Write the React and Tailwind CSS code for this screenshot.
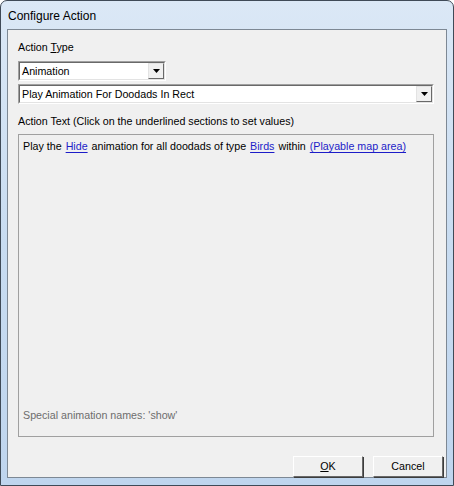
import { useState } from 'react'

function Combo({ value, className }) {
  return (
    <div className={`flex h-[20px] items-stretch border border-t-[#a0a0a0] border-l-[#a0a0a0] border-b-white border-r-white ${className}`}>
      <div className="flex flex-1 items-stretch border border-t-[#696969] border-l-[#696969] border-b-[#e3e3e3] border-r-[#e3e3e3] bg-white">
        <span className="flex flex-1 items-center pl-[2px] leading-none">{value}</span>
        <span className="flex w-[16px] items-center justify-center border border-t-[#e3e3e3] border-l-[#e3e3e3] border-b-[#696969] border-r-[#696969] bg-[#f0f0f0]">
          <svg width="7" height="4" viewBox="0 0 7 4"><path d="M0 0h7L3.5 4z" fill="#000" /></svg>
        </span>
      </div>
    </div>
  )
}

function Link({ children }) {
  return <span className="mx-[4px] text-[#1c1cc8] underline underline-offset-2">{children}</span>
}

function Btn({ children }) {
  return (
    <button className="h-[21px] w-[70px] border border-t-white border-l-white border-b-[#696969] border-r-[#696969] bg-[#f0f0f0] text-[10.7px] leading-none text-black shadow-[1px_1px_0_#3c3c3c]">
      {children}
    </button>
  )
}

export default function App() {
  const [type] = useState('Animation')
  return (
    <div className="h-[486px] w-[454px] bg-white" style={{ fontFamily: '"Liberation Sans", Arial, sans-serif' }}>
      <div className="flex h-full w-full flex-col rounded-t-[7px] border border-[#3f4a57] bg-gradient-to-b from-[#dbe8f6] via-[#c8dcf1] to-[#bfd5ee]">
        <div className="flex h-[28px] items-center px-[7px] pt-[2px] text-[12px] text-black">Configure Action</div>
        <div className="mx-[6px] mb-[7px] flex flex-1 flex-col border border-[#7d8894] bg-[#f0f0f0] px-[10px] text-[10.7px] text-black">
          <div className="mt-[11px] h-[13px] leading-[13px]">Action <span className="underline">T</span>ype</div>
          <Combo value={type} className="mt-[7px] w-[148px]" />
          <Combo value="Play Animation For Doodads In Rect" className="mt-[3px] w-[416px]" />
          <div className="mt-[11px] h-[13px] leading-[13px]">Action Text (Click on the underlined sections to set values)</div>
          <div className="mt-[6px] flex h-[303px] w-[416px] flex-col justify-between border border-[#a0a0a0] px-[4px] pb-[14px] pt-[5px]">
            <div className="leading-[13px]">
              Play the<Link>Hide</Link>animation for all doodads of type<Link>Birds</Link>within<Link>(Playable map area)</Link>
            </div>
            <div className="leading-[13px] text-[#6d6d6d]">Special animation names: 'show'</div>
          </div>
          <div className="-mr-[7px] mt-[19px] flex justify-end gap-[10px]">
            <Btn><span className="underline">O</span>K</Btn>
            <Btn>Cancel</Btn>
          </div>
        </div>
      </div>
    </div>
  )
}
